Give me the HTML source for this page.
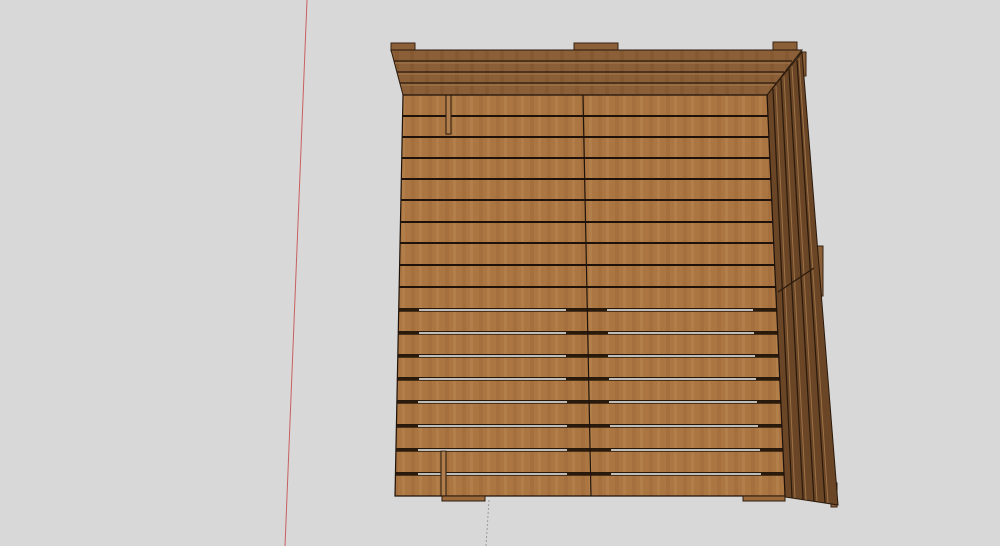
<!DOCTYPE html>
<html><head><meta charset="utf-8"><style>
html,body{margin:0;padding:0;background:#d8d8d8;}
svg{display:block}
</style></head><body>
<svg width="1000" height="546" viewBox="0 0 1000 546" xmlns="http://www.w3.org/2000/svg">
<defs>
<pattern id="grain" width="17" height="22" patternUnits="userSpaceOnUse">
<rect width="17" height="22" fill="#ac7643"/>
<rect x="3" width="4" height="22" fill="#a46e3c" opacity=".8"/>
<rect x="11" width="3" height="22" fill="#b47f4b" opacity=".8"/>
</pattern>
<pattern id="rim" width="15" height="10" patternUnits="userSpaceOnUse">
<rect width="15" height="10" fill="#8b5f37"/>
<rect x="5" width="4" height="10" fill="#855a33"/>
</pattern>
<clipPath id="deck"><polygon points="403,95 767,95 785,496 395,496"/></clipPath>
</defs>
<rect width="1000" height="546" fill="#d8d8d8"/>
<line x1="307" y1="0" x2="285" y2="546" stroke="#c86060" stroke-width="1"/>
<line x1="489" y1="500" x2="486" y2="546" stroke="#9a9a9a" stroke-width="1" stroke-dasharray="2,2"/>

<rect x="391" y="43" width="24" height="8" fill="#8b5f37" stroke="#3a2414" stroke-width="1"/>
<rect x="574" y="43" width="44" height="8" fill="#8b5f37" stroke="#3a2414" stroke-width="1"/>
<rect x="773" y="42" width="24" height="9" fill="#8b5f37" stroke="#3a2414" stroke-width="1"/>
<rect x="798" y="52" width="8" height="24" fill="#8b5f37" stroke="#3a2414"/>
<rect x="815" y="246" width="8" height="50" fill="#8b5f37" stroke="#3a2414"/>
<rect x="831" y="483" width="6" height="24" fill="#8b5f37" stroke="#3a2414"/>

<polygon points="767,95 802,52 838,505 785,497" fill="#6a4526" stroke="#2a1a0c" stroke-width="1"/>
<g stroke="#9c7246" stroke-width="1">
<line x1="776" y1="86" x2="795" y2="498"/>
<line x1="784" y1="76" x2="806" y2="500"/>
<line x1="792" y1="66" x2="817" y2="501"/>
<line x1="799" y1="58" x2="828" y2="503"/>
</g>
<g stroke="#2a1a0c" stroke-width="1.2">
<line x1="773" y1="89" x2="792" y2="498"/>
<line x1="781" y1="79" x2="803" y2="499"/>
<line x1="789" y1="69" x2="814" y2="501"/>
<line x1="797" y1="60" x2="825" y2="503"/>
<line x1="778" y1="292" x2="814" y2="268"/>
</g>

<polygon points="391,50 802,50 767,95 403,95" fill="url(#rim)" stroke="#2a1a0c" stroke-width="1"/>
<g stroke="#2a1a0c" stroke-width="1.3">
<line x1="394" y1="61" x2="792" y2="61"/>
<line x1="397" y1="72" x2="784" y2="72"/>
<line x1="400" y1="83" x2="776" y2="83"/>
</g>
<g stroke="#a67a4c" stroke-width="1">
<line x1="395" y1="63" x2="790" y2="63"/>
<line x1="398" y1="74" x2="782" y2="74"/>
<line x1="401" y1="85" x2="774" y2="85"/>
</g>

<g clip-path="url(#deck)">
<rect x="390" y="95" width="400" height="402" fill="url(#grain)"/>
<g stroke="#1e120a" stroke-width="2">
<line x1="390" y1="116" x2="790" y2="116"/>
<line x1="390" y1="137" x2="790" y2="137"/>
<line x1="390" y1="158" x2="790" y2="158"/>
<line x1="390" y1="179" x2="790" y2="179"/>
<line x1="390" y1="200" x2="790" y2="200"/>
<line x1="390" y1="222" x2="790" y2="222"/>
<line x1="390" y1="243" x2="790" y2="243"/>
<line x1="390" y1="265" x2="790" y2="265"/>
<line x1="390" y1="287" x2="790" y2="287"/>
<line x1="390" y1="309" x2="790" y2="309"/>
<line x1="390" y1="332" x2="790" y2="332"/>
<line x1="390" y1="355" x2="790" y2="355"/>
<line x1="390" y1="378" x2="790" y2="378"/>
<line x1="390" y1="401" x2="790" y2="401"/>
<line x1="390" y1="425" x2="790" y2="425"/>
<line x1="390" y1="449" x2="790" y2="449"/>
<line x1="390" y1="473" x2="790" y2="473"/>
</g>
<g stroke="#2a1a0c" stroke-width="3.5">
<line x1="390" y1="310" x2="790" y2="310"/><line x1="390" y1="333" x2="790" y2="333"/>
<line x1="390" y1="356" x2="790" y2="356"/><line x1="390" y1="379" x2="790" y2="379"/>
<line x1="390" y1="402" x2="790" y2="402"/><line x1="390" y1="426" x2="790" y2="426"/>
<line x1="390" y1="450" x2="790" y2="450"/><line x1="390" y1="474" x2="790" y2="474"/>
</g>
<g stroke="#f2f2f2" stroke-width="1.5">
<line x1="419" y1="310" x2="566" y2="310"/><line x1="607" y1="310" x2="753" y2="310"/>
<line x1="419" y1="333" x2="566" y2="333"/><line x1="608" y1="333" x2="754" y2="333"/>
<line x1="419" y1="356" x2="566" y2="356"/><line x1="608" y1="356" x2="755" y2="356"/>
<line x1="419" y1="379" x2="566" y2="379"/><line x1="609" y1="379" x2="756" y2="379"/>
<line x1="418" y1="402" x2="567" y2="402"/><line x1="609" y1="402" x2="757" y2="402"/>
<line x1="418" y1="426" x2="567" y2="426"/><line x1="610" y1="426" x2="758" y2="426"/>
<line x1="418" y1="450" x2="567" y2="450"/><line x1="611" y1="450" x2="760" y2="450"/>
<line x1="418" y1="474" x2="567" y2="474"/><line x1="611" y1="474" x2="761" y2="474"/>
</g>
<line x1="583" y1="95" x2="591" y2="496" stroke="#1e120a" stroke-width="1.2"/>
<rect x="446" y="94" width="5" height="40" fill="#b07e4c" stroke="#2a1a0c" stroke-width="1"/>
<rect x="441" y="451" width="5" height="46" fill="#b07e4c" stroke="#2a1a0c" stroke-width="1"/>
</g>
<polygon points="403,95 767,95 785,496 395,496" fill="none" stroke="#1e120a" stroke-width="1.2"/>
<rect x="442" y="496" width="43" height="5" fill="#9a6a3c" stroke="#2a1a0c" stroke-width="1"/>
<rect x="743" y="496" width="42" height="5" fill="#9a6a3c" stroke="#2a1a0c" stroke-width="1"/>
</svg>
</body></html>
